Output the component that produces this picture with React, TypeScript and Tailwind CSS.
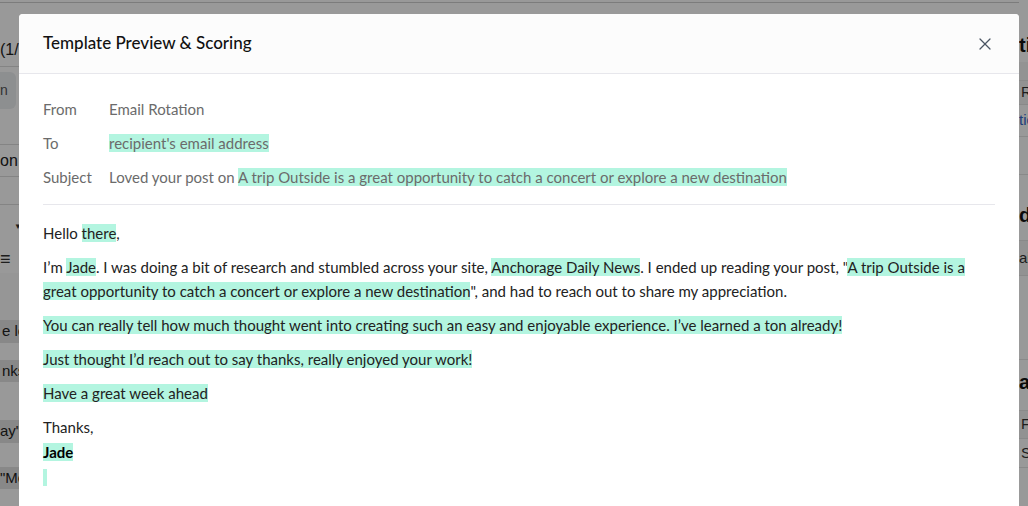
import { X } from "lucide-react";

const mark = "bg-[#b3f5e0]";

function Backdrop() {
  return (
    <div className="flex h-screen w-full overflow-hidden bg-white font-['Liberation_Sans',Arial,sans-serif] text-[15px] text-[#333]">
      <div className="w-[1019px] shrink-0">
        <div className="h-[3px] border-b border-[#cfcfcf]" />
        <div className="h-[64px] border-b border-[#ddd] pt-[35px] text-[16px] leading-6 text-[#222]">(1/2)</div>
        <div className="flex h-[78px] items-start gap-2.5 border-b border-[#ddd] pt-[5px]">
          <span className="rounded-r-md bg-[#eceef1] py-2 pr-2 pl-0 text-[14px] text-[#555]">n</span>
          <span className="h-8 w-6 rounded-md border border-[#ddd]" />
        </div>
        <div className="flex h-[32px] items-center border-b border-[#ddd] text-[16px] text-[#222]">
          on <span className="ml-1 text-[#a33]">{"{{"}</span>
        </div>
        <div className="h-[28px] border-b border-[#ddd]" />
        <div className="flex h-[68px] flex-col pt-[17px] pl-[14px]">
          <span className="h-[10px] text-[8px] leading-[10px] text-[#333]">▼</span>
          <div className="mt-[17px] flex h-5 items-center gap-2.5">
            <span className="-ml-[14px] text-[18px] leading-none">≡</span>
            <span className="h-5 w-px bg-[#ccc]" />
          </div>
        </div>
        <div className="h-[47px] bg-[#fafafa]" />
        <div className="flex flex-col items-start gap-[17px] text-[15px] text-[#222]">
          <span className="bg-[#e3e3e3] px-0.5">e learning</span>
          <span className="bg-[#e3e3e3] px-0.5">nks for</span>
          <span className="mt-[21px] bg-[#e3e3e3]">ay" was</span>
          <span className="mt-[7px] bg-[#e3e3e3]">"Monday</span>
        </div>
      </div>
      <div className="flex-1 text-[15px] text-[#333]">
        <div className="h-[62px] pt-[33px] text-[20px] leading-6 font-bold text-[#111]">tics</div>
        <div className="h-[18px] bg-[#f6f6f6]" />
        <div className="flex h-[25px] items-center border-y border-[#e5e5e5] bg-[#f3f3f3] pl-0.5">Rotation</div>
        <div className="flex h-[32px] items-center border-b border-[#e5e5e5] text-[#36c]">tion</div>
        <div className="h-[38px] border-b border-[#e5e5e5]" />
        <div className="h-[65px] pt-[28px] text-[20px] leading-6 font-bold text-[#111]">ds</div>
        <div className="flex h-[36px] items-center border-y border-[#e5e5e5] bg-[#f3f3f3]">ails</div>
        <div className="h-[84px] border-b border-[#e5e5e5]" />
        <div className="h-[50px] pt-[10px] text-[20px] leading-6 font-bold text-[#111]">a</div>
        <div className="flex h-[29px] items-center border-y border-[#e5e5e5] bg-[#f3f3f3] pl-0.5">From</div>
        <div className="flex h-[29px] items-center border-b border-[#e5e5e5] pl-0.5">Subject</div>
      </div>
    </div>
  );
}

function MetaRow({ label, children }: { label: string; children: React.ReactNode }) {
  return (
    <div className="flex h-[34px] items-center">
      <span className="w-[66px] shrink-0 text-[#6b6b6b]">{label}</span>
      <span className="text-[#6b6b6b]">{children}</span>
    </div>
  );
}

export default function App() {
  return (
    <div className="relative h-screen w-full overflow-hidden">
      <Backdrop />
      <div className="fixed inset-0 bg-black/40" />
      <div className="fixed top-[14px] left-[19px] h-[520px] w-[1000px] overflow-hidden rounded-t-[4px] bg-white font-['Lato','Open_Sans',sans-serif] text-[15px]">
        <div className="flex h-[60px] items-center justify-between border-b border-[#e7e7ec] bg-[#fcfcfc] px-6">
          <h2 className="pb-0.5 text-[17px] font-medium text-[#111]">Template Preview &amp; Scoring</h2>
          <button className="flex h-5 w-5 items-center justify-center text-[#4b5563]">
            <X size={24} strokeWidth={1.5} />
          </button>
        </div>
        <div className="px-6 pt-[18px]">
          <MetaRow label="From">Email Rotation</MetaRow>
          <MetaRow label="To">
            <span className={mark}>recipient's email address</span>
          </MetaRow>
          <MetaRow label="Subject">
            Loved your post on{" "}
            <span className={mark}>A trip Outside is a great opportunity to catch a concert or explore a new destination</span>
          </MetaRow>
          <div className="mt-[10px] border-t border-[#e7e7ec]" />
          <div className="pt-4 leading-6 text-[#222]">
            <p className="mb-2.5">
              Hello <span className={mark}>there</span>,
            </p>
            <p className="mb-2.5">
              I’m <span className={mark}>Jade</span>. I was doing a bit of research and stumbled across your site,{" "}
              <span className={mark}>Anchorage Daily News</span>. I ended up reading your post, "
              <span className={mark}>A trip Outside is a great opportunity to catch a concert or explore a new destination</span>
              ", and had to reach out to share my appreciation.
            </p>
            <p className="mb-2.5">
              <span className={mark}>
                You can really tell how much thought went into creating such an easy and enjoyable experience. I’ve learned a ton already!
              </span>
            </p>
            <p className="mb-2.5">
              <span className={mark}>Just thought I’d reach out to say thanks, really enjoyed your work!</span>
            </p>
            <p className="mb-2.5">
              <span className={mark}>Have a great week ahead</span>
            </p>
            <p className="leading-[25px]">
              Thanks,
              <br />
              <span className={`${mark} font-bold text-black`}>Jade</span>
              <br />
              <span className={`${mark} inline-block h-[17px] w-[4px] align-[-3px]`} />
            </p>
          </div>
        </div>
      </div>
    </div>
  );
}
